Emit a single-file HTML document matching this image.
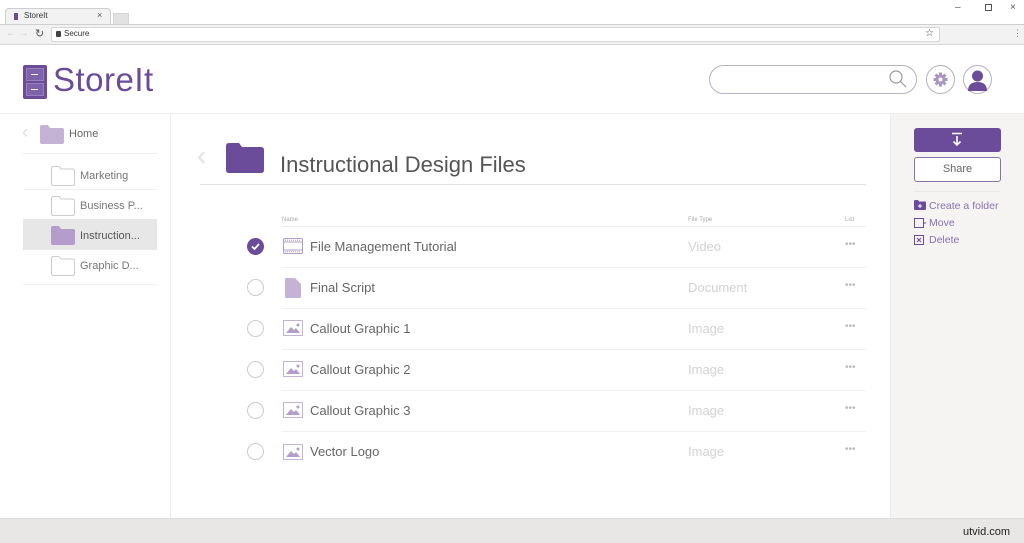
<!DOCTYPE html>
<html><head><meta charset="utf-8"><style>
*{margin:0;padding:0;box-sizing:border-box}
body{width:1024px;height:543px;overflow:hidden;background:#fff;font-family:"Liberation Sans",Arial,sans-serif;position:relative;color:#555}
.a{position:absolute}
.t{white-space:nowrap}
</style></head><body>
<!-- chrome top -->
<div class="a" style="left:0;top:0;width:1024px;height:24px;background:#fff"></div>
<div class="a" style="left:5px;top:8px;width:106px;height:17px;background:#f2f2f2;border:1px solid #cfcfcf;border-bottom:none;border-radius:4px 4px 0 0"></div>
<div class="a" style="left:113px;top:13px;width:16px;height:11px;background:#e2e2e2;border:1px solid #d5d5d5;border-bottom:none"></div>
<div class="a" style="left:14px;top:13px;width:4px;height:7px;background:#6b4c9a"></div>
<div class="a t" style="left:24px;top:11px;font-size:8px;color:#333">StoreIt</div>
<div class="a t" style="left:97px;top:10px;font-size:9px;color:#555">×</div>
<div class="a t" style="left:955px;top:2px;font-size:10px;color:#555">–</div>
<div class="a" style="left:985px;top:4px;width:7px;height:7px;border:1px solid #555"></div>
<div class="a t" style="left:1010px;top:2px;font-size:10px;color:#555">×</div>
<div class="a" style="left:0;top:24px;width:1024px;height:21px;background:#f2f2f2;border-top:1px solid #cfcfcf;border-bottom:1px solid #d8d8d8"></div>
<div class="a t" style="left:6px;top:28px;font-size:10px;color:#ccc">← →</div>
<div class="a t" style="left:35px;top:27px;font-size:11px;color:#555">↻</div>
<div class="a" style="left:51px;top:27px;width:889px;height:15px;background:#fff;border:1px solid #d5d5d5;border-radius:2px"></div>
<div class="a" style="left:56px;top:31px;width:5px;height:6px;background:#444;border-radius:1px"></div>
<div class="a t" style="left:64px;top:29px;font-size:8px;color:#333">Secure</div>
<div class="a t" style="left:925px;top:28px;font-size:10px;color:#444">☆</div>
<div class="a t" style="left:1013px;top:28px;font-size:9px;color:#777">⋮</div>

<!-- header -->
<div class="a" style="left:23px;top:65px;width:24px;height:34px;background:#6b4c9a;border-radius:2px"></div>
<div class="a" style="left:26px;top:68px;width:18px;height:13px;background:#7e62ab;border:1px solid #fff3"></div>
<div class="a" style="left:26px;top:83px;width:18px;height:13px;background:#7e62ab;border:1px solid #fff3"></div>
<div class="a" style="left:31px;top:74px;width:7px;height:1px;background:#fff"></div>
<div class="a" style="left:31px;top:89px;width:7px;height:1px;background:#fff"></div>
<div class="a t" style="left:53px;top:61px;font-size:33px;color:#6b4c9a;letter-spacing:0.5px">StoreIt</div>
<div class="a" style="left:709px;top:65px;width:208px;height:29px;border:1px solid #b9b1c4;border-radius:15px"></div>
<svg class="a" style="left:888px;top:69px" width="20" height="20"><circle cx="8" cy="8" r="6" fill="none" stroke="#999" stroke-width="1.2"/><line x1="12.5" y1="12.5" x2="18" y2="18" stroke="#999" stroke-width="1.2"/></svg>
<div class="a" style="left:926px;top:65px;width:29px;height:29px;border:1px solid #b9b1c4;border-radius:50%"></div>
<svg class="a" style="left:932px;top:71px" width="17" height="17" viewBox="0 0 17 17"><g fill="#a996c4"><circle cx="8.5" cy="8.5" r="5"/><rect x="7" y="1.5" width="3" height="14"/><rect x="1.5" y="7" width="14" height="3"/><rect x="7" y="1.5" width="3" height="14" transform="rotate(45 8.5 8.5)"/><rect x="7" y="1.5" width="3" height="14" transform="rotate(-45 8.5 8.5)"/></g><circle cx="8.5" cy="8.5" r="2" fill="#fff"/></svg>
<div class="a" style="left:963px;top:65px;width:29px;height:29px;border:1px solid #b9b1c4;border-radius:50%;overflow:hidden"></div>
<svg class="a" style="left:963px;top:65px" width="29" height="29"><circle cx="14.5" cy="11" r="5.5" fill="#6b4c9a"/><path d="M5 26 Q5 17 14.5 17 Q24 17 24 26 Z" fill="#6b4c9a"/></svg>

<div class="a" style="left:0;top:113px;width:1024px;height:1px;background:#eee"></div>
<!-- sidebar -->
<div class="a" style="left:170px;top:114px;width:1px;height:404px;background:#eee"></div>
<div class="a t" style="left:22px;top:122px;font-size:18px;color:#ddd">‹</div>
<svg class="a" style="left:40px;top:125px" width="24" height="19"><path d="M0 2 Q0 0 2 0 H8 L10 3 H22 Q24 3 24 5 V17 Q24 19 22 19 H2 Q0 19 0 17 Z" fill="#c5b3d6"/></svg>
<div class="a t" style="left:69px;top:128px;font-size:11px;color:#666">Home</div>
<div class="a" style="left:23px;top:153px;width:134px;height:1px;background:#eee"></div>
<div class="a" style="left:23px;top:219px;width:134px;height:31px;background:#e8e7e7"></div>
<svg class="a" style="left:51px;top:166px" width="24" height="20"><path d="M.5 2.5 Q.5 .5 2.5 .5 H8 L10 3 H21.5 Q23.5 3 23.5 5 V17.5 Q23.5 19.5 21.5 19.5 H2.5 Q.5 19.5 .5 17.5 Z" fill="#fff" stroke="#ccc"/></svg>
<svg class="a" style="left:51px;top:196px" width="24" height="20"><path d="M.5 2.5 Q.5 .5 2.5 .5 H8 L10 3 H21.5 Q23.5 3 23.5 5 V17.5 Q23.5 19.5 21.5 19.5 H2.5 Q.5 19.5 .5 17.5 Z" fill="#fff" stroke="#ccc"/></svg>
<svg class="a" style="left:51px;top:226px" width="24" height="19"><path d="M0 2 Q0 0 2 0 H8 L10 3 H22 Q24 3 24 5 V17 Q24 19 22 19 H2 Q0 19 0 17 Z" fill="#b49ccb"/></svg>
<svg class="a" style="left:51px;top:256px" width="24" height="20"><path d="M.5 2.5 Q.5 .5 2.5 .5 H8 L10 3 H21.5 Q23.5 3 23.5 5 V17.5 Q23.5 19.5 21.5 19.5 H2.5 Q.5 19.5 .5 17.5 Z" fill="#fff" stroke="#ccc"/></svg>
<div class="a t" style="left:80px;top:170px;font-size:11px;color:#777">Marketing</div>
<div class="a t" style="left:80px;top:200px;font-size:11px;color:#777">Business P...</div>
<div class="a t" style="left:80px;top:230px;font-size:11px;color:#555">Instruction...</div>
<div class="a t" style="left:80px;top:260px;font-size:11px;color:#777">Graphic D...</div>
<div class="a" style="left:23px;top:189px;width:134px;height:1px;background:#f2f2f2"></div>
<div class="a" style="left:23px;top:284px;width:134px;height:1px;background:#eee"></div>

<!-- main -->
<div class="a t" style="left:197px;top:140px;font-size:28px;color:#e2e2e2;font-weight:100">‹</div>
<svg class="a" style="left:226px;top:143px" width="38" height="30"><path d="M0 3 Q0 0 3 0 H13 L16 4 H35 Q38 4 38 7 V27 Q38 30 35 30 H3 Q0 30 0 27 Z" fill="#6b4c9a"/></svg>
<div class="a t" style="left:280px;top:152px;font-size:22px;color:#555">Instructional Design Files</div>
<div class="a" style="left:200px;top:184px;width:666px;height:1px;background:#e2e2e2"></div>
<div class="a t" style="left:282px;top:217px;font-size:6px;color:#aaa">Name</div>
<div class="a t" style="left:688px;top:217px;font-size:6px;color:#aaa">File Type</div>
<div class="a t" style="left:845px;top:217px;font-size:6px;color:#aaa">List</div>
<div class="a" style="left:282px;top:226px;width:584px;height:1px;background:#eee"></div>

<!-- rows -->
<div class="a" style="left:247px;top:238px;width:17px;height:17px;border-radius:50%;background:#6b4c9a"></div>
<svg class="a" style="left:247px;top:238px" width="17" height="17"><path d="M5 8.5 L7.5 11 L12 6" fill="none" stroke="#fff" stroke-width="1.8"/></svg>
<svg class="a" style="left:283px;top:238px" width="20" height="16"><rect x=".5" y=".5" width="19" height="15" rx="1.5" fill="#fff" stroke="#b49ccb"/><rect x=".5" y="4" width="19" height="8" fill="#fff" stroke="#b49ccb"/><path d="M2 2.2h16M2 13.8h16" stroke="#b49ccb" stroke-dasharray="1 1"/></svg>
<div class="a t" style="left:310px;top:239px;font-size:13px;color:#666">File Management Tutorial</div>
<div class="a t" style="left:688px;top:239px;font-size:13px;color:#d2d2d2">Video</div>
<div class="a t" style="left:845px;top:239px;font-size:10px;color:#bbb">•••</div>
<div class="a" style="left:282px;top:267px;width:584px;height:1px;background:#f0f0f0"></div>

<div class="a" style="left:247px;top:279px;width:17px;height:17px;border-radius:50%;border:1px solid #ccc"></div>
<svg class="a" style="left:285px;top:278px" width="16" height="20"><path d="M0 1.5 Q0 0 1.5 0 H10 L16 6 V18.5 Q16 20 14.5 20 H1.5 Q0 20 0 18.5 Z" fill="#c5b3d6"/></svg>
<div class="a t" style="left:310px;top:280px;font-size:13px;color:#666">Final Script</div>
<div class="a t" style="left:688px;top:280px;font-size:13px;color:#d2d2d2">Document</div>
<div class="a t" style="left:845px;top:280px;font-size:10px;color:#bbb">•••</div>
<div class="a" style="left:282px;top:308px;width:584px;height:1px;background:#f0f0f0"></div>

<div class="a" style="left:247px;top:320px;width:17px;height:17px;border-radius:50%;border:1px solid #ccc"></div>
<svg class="a" style="left:283px;top:320px" width="20" height="16"><rect x=".5" y=".5" width="19" height="15" fill="#fff" stroke="#c5b3d6"/><path d="M3 13 L8 7 L11 10 L13 8 L17 13 Z" fill="#b49ccb"/><circle cx="15" cy="5" r="1.5" fill="#b49ccb"/></svg>
<div class="a t" style="left:310px;top:321px;font-size:13px;color:#666">Callout Graphic 1</div>
<div class="a t" style="left:688px;top:321px;font-size:13px;color:#d2d2d2">Image</div>
<div class="a t" style="left:845px;top:321px;font-size:10px;color:#bbb">•••</div>
<div class="a" style="left:282px;top:349px;width:584px;height:1px;background:#f0f0f0"></div>

<div class="a" style="left:247px;top:361px;width:17px;height:17px;border-radius:50%;border:1px solid #ccc"></div>
<svg class="a" style="left:283px;top:361px" width="20" height="16"><rect x=".5" y=".5" width="19" height="15" fill="#fff" stroke="#c5b3d6"/><path d="M3 13 L8 7 L11 10 L13 8 L17 13 Z" fill="#b49ccb"/><circle cx="15" cy="5" r="1.5" fill="#b49ccb"/></svg>
<div class="a t" style="left:310px;top:362px;font-size:13px;color:#666">Callout Graphic 2</div>
<div class="a t" style="left:688px;top:362px;font-size:13px;color:#d2d2d2">Image</div>
<div class="a t" style="left:845px;top:362px;font-size:10px;color:#bbb">•••</div>
<div class="a" style="left:282px;top:390px;width:584px;height:1px;background:#f0f0f0"></div>

<div class="a" style="left:247px;top:402px;width:17px;height:17px;border-radius:50%;border:1px solid #ccc"></div>
<svg class="a" style="left:283px;top:402px" width="20" height="16"><rect x=".5" y=".5" width="19" height="15" fill="#fff" stroke="#c5b3d6"/><path d="M3 13 L8 7 L11 10 L13 8 L17 13 Z" fill="#b49ccb"/><circle cx="15" cy="5" r="1.5" fill="#b49ccb"/></svg>
<div class="a t" style="left:310px;top:403px;font-size:13px;color:#666">Callout Graphic 3</div>
<div class="a t" style="left:688px;top:403px;font-size:13px;color:#d2d2d2">Image</div>
<div class="a t" style="left:845px;top:403px;font-size:10px;color:#bbb">•••</div>
<div class="a" style="left:282px;top:431px;width:584px;height:1px;background:#f0f0f0"></div>

<div class="a" style="left:247px;top:443px;width:17px;height:17px;border-radius:50%;border:1px solid #ccc"></div>
<svg class="a" style="left:283px;top:444px" width="20" height="16"><rect x=".5" y=".5" width="19" height="15" fill="#fff" stroke="#c5b3d6"/><path d="M3 13 L8 7 L11 10 L13 8 L17 13 Z" fill="#b49ccb"/><circle cx="15" cy="5" r="1.5" fill="#b49ccb"/></svg>
<div class="a t" style="left:310px;top:444px;font-size:13px;color:#666">Vector Logo</div>
<div class="a t" style="left:688px;top:444px;font-size:13px;color:#d2d2d2">Image</div>
<div class="a t" style="left:845px;top:444px;font-size:10px;color:#bbb">•••</div>

<!-- right panel -->
<div class="a" style="left:890px;top:114px;width:134px;height:404px;background:#f5f4f3;border-left:1px solid #ececec"></div>
<div class="a" style="left:914px;top:128px;width:87px;height:24px;background:#6b4c9a;border-radius:3px"></div>
<svg class="a" style="left:950px;top:132px" width="14" height="16"><path d="M2 1.5H12M7 4V13M3.5 9.5L7 13L10.5 9.5" fill="none" stroke="#fff" stroke-width="1.6"/></svg>
<div class="a" style="left:914px;top:157px;width:87px;height:25px;background:#fff;border:1px solid #8a73ad;border-radius:3px"></div>
<div class="a t" style="left:914px;top:163px;width:87px;text-align:center;font-size:11px;color:#666">Share</div>
<div class="a" style="left:914px;top:191px;width:87px;height:1px;background:#eaeaea"></div>
<svg class="a" style="left:914px;top:200px" width="12" height="10"><path d="M0 1Q0 0 1 0H4L5 1.5H11Q12 1.5 12 2.5V9Q12 10 11 10H1Q0 10 0 9Z" fill="#6b4c9a"/><path d="M6 4v4M4 6h4" stroke="#fff" stroke-width="1"/></svg>
<div class="a t" style="left:929px;top:200px;font-size:10.5px;color:#8a73ad">Create a folder</div>
<svg class="a" style="left:914px;top:218px" width="12" height="10"><rect x=".5" y=".5" width="9" height="9" fill="none" stroke="#6b4c9a"/><path d="M9 5h3" stroke="#6b4c9a"/></svg>
<div class="a t" style="left:929px;top:217px;font-size:10.5px;color:#8a73ad">Move</div>
<svg class="a" style="left:914px;top:235px" width="10" height="10"><rect x=".5" y=".5" width="9" height="9" fill="none" stroke="#6b4c9a"/><path d="M3 3l4 4M7 3l-4 4" stroke="#6b4c9a"/></svg>
<div class="a t" style="left:929px;top:234px;font-size:10.5px;color:#8a73ad">Delete</div>

<!-- bottom bar -->
<div class="a" style="left:0;top:518px;width:1024px;height:25px;background:#e8e7e5;border-top:1px solid #ddd"></div>
<div class="a t" style="left:963px;top:526px;font-size:11px;color:#222">utvid.com</div>
</body></html>
